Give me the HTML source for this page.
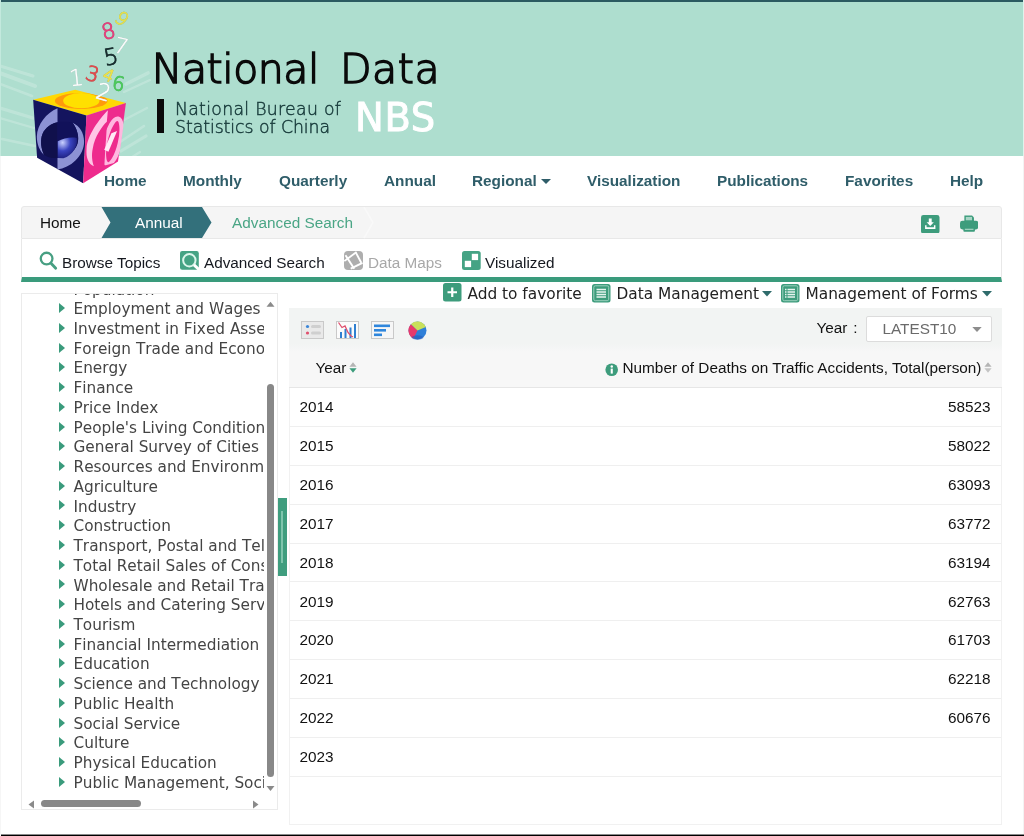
<!DOCTYPE html>
<html lang="en">
<head>
<meta charset="utf-8">
<title>National Data</title>
<style>
*{box-sizing:border-box;margin:0;padding:0}
html,body{width:1024px;height:836px;overflow:hidden;background:#fff}
body{font-family:"Liberation Sans",sans-serif;color:#222;position:relative}
#wrap{position:absolute;left:0;top:0;width:1024px;height:836px;will-change:transform}
.abs{position:absolute}
#topbar{left:0;top:0;width:1024px;height:2px;background:#2b5a61}
#hdr{left:0;top:2px;width:1024px;height:154px;background:#aedecf}
#botbar{left:1px;top:834px;width:1023px;height:2px;background:linear-gradient(#8a8a8a 50%,#000 50%)}
#title,#title2{left:151.7px;top:43.8px;font-family:"DejaVu Sans Light","DejaVu Sans",sans-serif;font-weight:200;font-size:41px;line-height:50px;color:#0a0a0a;white-space:nowrap;-webkit-text-stroke:1.5px #0a0a0a;letter-spacing:-.45px;paint-order:stroke fill}
#title2{left:340px;letter-spacing:.55px}
#bar{left:157px;top:99px;width:7px;height:34px;background:#0a0a0a}
#sub,#sub2{left:175px;top:99.5px;font-family:"DejaVu Sans Light","DejaVu Sans",sans-serif;font-weight:200;font-size:17.3px;line-height:18px;color:#173a3a;white-space:nowrap;letter-spacing:.3px;-webkit-text-stroke:.45px #173a3a}
#sub2{top:117.8px;letter-spacing:-.05px}
#nbs{left:355px;top:95px;font-family:"DejaVu Sans",sans-serif;font-size:38.5px;line-height:46px;color:#fff;white-space:nowrap;-webkit-text-stroke:.9px #fff;letter-spacing:.6px}
#nav{left:0;top:170px;height:22px;width:1024px}
#nav a{position:absolute;top:0;font-weight:bold;font-size:15.33px;line-height:22px;color:#2f5d69;text-decoration:none;white-space:nowrap}
.caret{display:inline-block;width:0;height:0;border-left:5px solid transparent;border-right:5px solid transparent;border-top:5px solid #2f5d69;vertical-align:middle;margin-left:4px}
#crumb{left:21px;top:206px;width:981px;height:32.5px;background:#f5f5f5;border:1px solid #e8e8e8;border-radius:3px 3px 0 0}
#crumb span{position:absolute;font-size:15.33px;line-height:30px;top:0.5px;white-space:nowrap}
#tools{left:21px;top:238.5px;width:981px;height:43.5px;background:#fff;border-left:1px solid #e8e8e8;border-right:1px solid #e8e8e8;border-bottom:5px solid #3a9b7c}
#tools span{position:absolute;font-size:15.3px;line-height:20px;top:14.5px;white-space:nowrap;color:#15181f}
.t2{font-family:"DejaVu Sans",sans-serif;font-size:15.35px;line-height:20px;color:#222;white-space:nowrap}
.ic{position:absolute;display:block}
#tree{left:21px;top:293px;width:257px;height:517px;border:1px solid #ebebeb;background:#fff;overflow:hidden}
#treeclip{position:absolute;left:0;top:0;width:242.3px;height:500px;overflow:hidden}
.ti{position:absolute;left:51.5px;font-family:"DejaVu Sans",sans-serif;font-kerning:none;font-size:15.3px;line-height:20px;color:#444;white-space:nowrap}
.ti i{position:absolute;left:-14.5px;top:3.9px;width:0;height:0;border-top:5.75px solid transparent;border-bottom:5.75px solid transparent;border-left:6.2px solid #3a9b7c}
#panel{left:289px;top:308px;width:713px;height:517px;background:#fff;border:1px solid #f1f1f1}
#thead{left:289px;top:308px;width:713px;height:80px;background:linear-gradient(#f2f4f3 0,#f2f4f3 36px,#f7f7f7 44px,#f7f7f7 100%);border-bottom:1px solid #e6e6e6}
.row{left:290px;width:711px;height:38.9px;border-bottom:1px solid #efefef;font-size:15.33px;line-height:20px;color:#111}
.row .y{position:absolute;left:9.5px;top:9px}
.row .v{position:absolute;right:10.5px;top:9px}

</style>
</head>
<body>
<div id="wrap">
<div id="topbar" class="abs"></div>
<div id="hdr" class="abs"></div>
<svg class="abs" style="left:0;top:0" width="160" height="200" viewBox="0 0 160 200">
<defs>
<radialGradient id="sph" cx="0.25" cy="0.25" r="0.9"><stop offset="0" stop-color="#c9d0ff"/><stop offset="0.45" stop-color="#3a44c0"/><stop offset="1" stop-color="#14146a"/></radialGradient>
<clipPath id="cr"><path d="M668,228 L810,178 L748,622 L640,652 Z"/></clipPath>
<clipPath id="ct"><path d="M100,150 L420,75 L805,175 L505,270 Z"/></clipPath>
</defs>
<g stroke="#fff" stroke-linecap="round" fill="none" opacity=".2">
<path d="M0 66 33 76" stroke-width="2.9"/><path d="M0 73 35 86" stroke-width="4.0"/><path d="M0 84 32 96" stroke-width="2.5"/><path d="M0 108 33 118" stroke-width="3.2"/><path d="M0 118 34 128" stroke-width="2.2"/><path d="M2 139 35 146" stroke-width="2.5"/>
<path d="M121 151 146 136" stroke-width="3.2"/><path d="M120 142 144 126" stroke-width="2.5"/><path d="M124 120 147 108" stroke-width="2.3"/><path d="M126 84 148 73" stroke-width="3.6"/><path d="M124 92 150 80" stroke-width="2.3"/><path d="M118 166 140 152" stroke-width="2.2"/>
</g>
<g transform="translate(20 80) scale(0.13158)">
<path d="M100,150 L420,75 L805,175 L505,270 Z" fill="#ffd803"/>
<g clip-path="url(#ct)">
<ellipse cx="465" cy="159" rx="200" ry="61" fill="#ff9a0c"/>
<ellipse cx="466" cy="157" rx="138" ry="58" fill="#ffe000"/>
<path d="M300,95 L640,95 L640,130 L300,125Z" fill="#ffd803" opacity=".0"/>
</g>
<path d="M100,150 L505,270 L480,785 L130,590 Z" fill="#14145e"/>
<path d="M285,215 C200,250 130,340 128,430 C128,490 150,540 182,568 C160,520 156,470 165,430 C178,378 222,335 285,322 Z" fill="#8d92d4"/>
<path d="M285,680 C380,670 487,580 487,470 C487,400 452,350 400,325 C432,370 447,420 441,462 C434,530 370,585 285,592 Z" fill="#8d92d4"/>
<path d="M285,322 C222,335 178,378 165,430 C156,470 160,520 182,568 C210,590 250,596 285,592 Z" fill="#10104c"/>
<path d="M285,322 C330,315 370,318 400,325 C432,370 447,420 441,462 C434,530 370,585 285,592 Z" fill="#11115a"/>
<path d="M287,466 C330,440 390,430 432,440 C442,500 400,572 330,594 L287,592 Z" fill="url(#sph)"/>
<path d="M505,270 L805,175 L745,620 L480,785 Z" fill="#ee2b8d"/>
<path d="M668,230 C600,300 512,420 506,520 C500,590 520,640 562,655 C548,620 542,570 553,520 C568,430 625,350 660,318 Z" fill="#ffc6e6"/>
<g clip-path="url(#cr)">
<ellipse cx="705" cy="468" rx="56" ry="178" transform="rotate(13 705 468)" fill="none" stroke="#ffb8df" stroke-width="34"/>
</g>
<path d="M695,405 L738,388 L672,545 L640,530 Z" fill="#ffe9f5"/>
</g>
<g font-family="'DejaVu Sans Light','DejaVu Sans',sans-serif" font-weight="200" text-anchor="middle" style="filter:drop-shadow(.8px .9px .5px rgba(70,110,100,.5))">
<text x="0" y="0" font-size="18.4" fill="#e6e04c" stroke="#e6e04c" stroke-width=".7" transform="translate(121.600 19) rotate(40) translate(0 6)">9</text>
<text x="0" y="0" font-size="21.6" fill="#e63f7b" stroke="#e63f7b" stroke-width=".8" transform="translate(108.500 31.500) rotate(-14) translate(0 7)">8</text>
<text x="0" y="0" font-size="21.6" fill="#fff" stroke="#fff" stroke-width=".5" transform="translate(121 46.500) rotate(14) translate(0 7)">7</text>
<text x="0" y="0" font-size="22.7" fill="#15292b" stroke="#15292b" stroke-width=".7" transform="translate(111 57) rotate(-10) translate(0 7.500)">5</text>
<text x="0" y="0" font-size="22.7" fill="#fff" stroke="#fff" stroke-width=".5" transform="translate(76.500 78) rotate(-6) translate(0 7.500)">1</text>
<text x="0" y="0" font-size="20.5" fill="#e2494b" stroke="#e2494b" stroke-width=".8" transform="translate(92.500 74) rotate(16) translate(0 7)">3</text>
<text x="0" y="0" font-size="16.2" fill="#ece04a" stroke="#ece04a" stroke-width=".9" transform="translate(108.500 75.500) rotate(22) translate(0 5.500)">4</text>
<text x="0" y="0" font-size="19.4" fill="#4cc95c" stroke="#4cc95c" stroke-width=".9" transform="translate(118.500 84) rotate(10) translate(0 6.500)">6</text>
<text x="0" y="0" font-size="22.7" fill="#fff" stroke="#fff" stroke-width=".6" transform="translate(103.500 92.500) rotate(16) translate(0 7.500)">2</text>
</g>
</svg>

<div id="title" class="abs">National</div><div id="title2" class="abs">Data</div>
<div id="bar" class="abs"></div>
<div id="sub" class="abs">National Bureau of</div><div id="sub2" class="abs">Statistics of China</div>
<div id="nbs" class="abs">NBS</div>
<div id="nav" class="abs">
<a style="left:104px">Home</a>
<a style="left:183px">Monthly</a>
<a style="left:279px">Quarterly</a>
<a style="left:384px">Annual</a>
<a style="left:472px">Regional<i class="caret"></i></a>
<a style="left:587px">Visualization</a>
<a style="left:717px">Publications</a>
<a style="left:845px">Favorites</a>
<a style="left:950px">Help</a>
</div>
<div id="crumb" class="abs">
<span style="left:18px;color:#111">Home</span>
<svg class="ic" style="left:79px;top:0px" width="112" height="32" viewBox="0 0 112 32"><path d="M0.5 0H101L110.5 15.5 101 31H0.5L9.500 15.5Z" fill="#33707b"/></svg>
<span style="left:113px;color:#fff">Annual</span>
<span style="left:210px;color:#4aa585">Advanced Search</span>
<svg class="ic" style="left:341px;top:0px" width="14" height="32" viewBox="0 0 14 32"><path d="M1 0 10 15.5 1 31" fill="none" stroke="#f9f9f9" stroke-width="1.5"/></svg>
<svg class="ic" style="left:899px;top:7.500px" width="18.500" height="18.500" viewBox="0 0 19 19"><rect x="0" y="0" width="19" height="19" rx="2.5" fill="#3d9c7c"/><path d="M8 3.5h3v4h2.2L9.5 11.3 5.8 7.500H8Z" fill="#fff"/><path d="M4.200 10.500v3.800h10.600v-3.800h-1.500v2H5.700v-2Z" fill="#fff"/></svg>
<svg class="ic" style="left:938px;top:7.500px" width="18.300" height="17.300" viewBox="0 0 19 18"><rect x="0" y="6" width="19" height="9" rx="2.500" fill="#3d9c7c"/><path d="M4.500 0.500H12.500L14.500 2.500V7H4.500Z" fill="#3d9c7c"/><rect x="6" y="2" width="6.500" height="3.500" fill="#a9d6c6"/><rect x="3.500" y="13" width="12" height="4.500" rx="1" fill="#3d9c7c"/><rect x="5" y="14.300" width="9" height="1.200" fill="#a9d6c6"/></svg>
</div>
<div id="tools" class="abs">
<svg class="ic" style="left:14.500px;top:12px" width="22" height="20" viewBox="0 0 22 20"><circle cx="9.600" cy="7.600" r="5.850" fill="none" stroke="#479f82" stroke-width="2.300"/><path d="M14 12.300 18.700 17.300" stroke="#479f82" stroke-width="2.800" stroke-linecap="round"/></svg>
<span style="left:40px">Browse Topics</span>
<svg class="ic" style="left:158px;top:12.500px" width="21" height="21" viewBox="0 0 21 21"><rect x="0" y="0" width="18.800" height="18.800" rx="2.200" fill="#45a384"/><circle cx="9.350" cy="9.250" r="6.200" fill="none" stroke="#dcf6ec" stroke-width="2"/><path d="M14 13.800 19.500 19" stroke="#fff" stroke-width="3"/></svg>
<span style="left:182px">Advanced Search</span>
<svg class="ic" style="left:322px;top:12.400px" width="20" height="20" viewBox="0 0 20 20"><rect x="0" y="0" width="19" height="19" rx="4" fill="#aeaeae"/><g stroke="#fff" stroke-width="1.900" fill="none"><path d="M1.500 4.200 10.250 17.700"/><path d="M12 1.900 17.300 11.800"/><path d="M12.600 1 0.300 10.100"/><path d="M18.500 11.800 6.700 17.700"/></g></svg>
<span style="left:346px;color:#a8a8a8">Data Maps</span>
<svg class="ic" style="left:439.500px;top:12px" width="20" height="20" viewBox="0 0 20 20"><rect x="0" y="0" width="18.700" height="19" rx="2.500" fill="#45a384"/><rect x="9.800" y="2.800" width="6.300" height="6.300" fill="#fff"/><rect x="2.800" y="9.800" width="6.300" height="6.300" fill="#fff"/></svg>
<span style="left:463px">Visualized</span>
</div>
<svg class="ic" style="left:443px;top:283.200px" width="19" height="19" viewBox="0 0 19 19"><rect x="0" y="0" width="18.500" height="18.500" rx="2.500" fill="#3d9c7c"/><path d="M9.250 4.500v9.500M4.500 9.250h9.500" stroke="#fff" stroke-width="2.200"/></svg>
<div class="abs t2" style="left:467.500px;top:283.500px">Add to favorite</div>
<svg class="ic" style="left:592px;top:283.500px" width="19" height="19" viewBox="0 0 19 19"><rect x="0" y="0" width="18.500" height="18.500" rx="2.500" fill="#3d9c7c"/><rect x="1.800" y="1.800" width="14.900" height="14.900" rx="1.500" fill="none" stroke="#9ad0bd" stroke-width="1"/><path d="M4.500 5.500h9.500M4.500 8h9.500M4.500 10.500h9.500M4.500 13h9.500" stroke="#e6f4ee" stroke-width="1.300"/></svg>
<div class="abs t2" style="left:616.500px;top:283.500px">Data Management</div>
<svg class="ic" style="left:761.500px;top:291px" width="10" height="6" viewBox="0 0 10 6"><path d="M0 0H10L5 5.500Z" fill="#2f6b6b"/></svg>
<svg class="ic" style="left:781px;top:283.500px" width="19" height="19" viewBox="0 0 19 19"><rect x="0" y="0" width="18.500" height="18.500" rx="2.500" fill="#3d9c7c"/><rect x="1.800" y="1.800" width="14.900" height="14.900" rx="1.500" fill="none" stroke="#9ad0bd" stroke-width="1"/><path d="M6.500 5.500h7.500M6.500 8h7.500M6.500 10.500h7.500M6.500 13h7.500" stroke="#e6f4ee" stroke-width="1.300"/><path d="M4 5.500h1.500M4 8h1.500M4 10.500h1.500M4 13h1.500" stroke="#e6f4ee" stroke-width="1.300"/></svg>
<div class="abs t2" style="left:805.500px;top:283.500px">Management of Forms</div>
<svg class="ic" style="left:981.500px;top:291px" width="10" height="6" viewBox="0 0 10 6"><path d="M0 0H10L5 5.500Z" fill="#2f6b6b"/></svg>

<div id="tree" class="abs">
<div id="treeclip">
<div class="ti" style="top:-14.43px"><i></i>Population</div>
<div class="ti" style="top:5.30px"><i></i>Employment and Wages</div>
<div class="ti" style="top:25.03px"><i></i>Investment in Fixed Assets</div>
<div class="ti" style="top:44.76px"><i></i>Foreign Trade and Economic Cooperation</div>
<div class="ti" style="top:64.49px"><i></i>Energy</div>
<div class="ti" style="top:84.22px"><i></i>Finance</div>
<div class="ti" style="top:103.95px"><i></i>Price Index</div>
<div class="ti" style="top:123.68px"><i></i>People's Living Conditions</div>
<div class="ti" style="top:143.41px"><i></i>General Survey of Cities</div>
<div class="ti" style="top:163.14px"><i></i>Resources and Environment</div>
<div class="ti" style="top:182.87px"><i></i>Agriculture</div>
<div class="ti" style="top:202.60px"><i></i>Industry</div>
<div class="ti" style="top:222.33px"><i></i>Construction</div>
<div class="ti" style="top:242.06px"><i></i>Transport, Postal and Telecommunication Services</div>
<div class="ti" style="top:261.79px"><i></i>Total Retail Sales of Consumer Goods</div>
<div class="ti" style="top:281.52px"><i></i>Wholesale and Retail Trades</div>
<div class="ti" style="top:301.25px"><i></i>Hotels and Catering Services</div>
<div class="ti" style="top:320.98px"><i></i>Tourism</div>
<div class="ti" style="top:340.71px"><i></i>Financial Intermediation</div>
<div class="ti" style="top:360.44px"><i></i>Education</div>
<div class="ti" style="top:380.17px"><i></i>Science and Technology</div>
<div class="ti" style="top:399.90px"><i></i>Public Health</div>
<div class="ti" style="top:419.63px"><i></i>Social Service</div>
<div class="ti" style="top:439.36px"><i></i>Culture</div>
<div class="ti" style="top:459.09px"><i></i>Physical Education</div>
<div class="ti" style="top:478.82px"><i></i>Public Management, Social Security and Social Organization</div>
</div>
</div>
<div id="panel" class="abs"></div>
<div id="thead" class="abs"></div>
<div class="row abs" style="top:388.0px"><span class="y">2014</span><span class="v">58523</span></div>
<div class="row abs" style="top:426.9px"><span class="y">2015</span><span class="v">58022</span></div>
<div class="row abs" style="top:465.8px"><span class="y">2016</span><span class="v">63093</span></div>
<div class="row abs" style="top:504.7px"><span class="y">2017</span><span class="v">63772</span></div>
<div class="row abs" style="top:543.6px"><span class="y">2018</span><span class="v">63194</span></div>
<div class="row abs" style="top:582.5px"><span class="y">2019</span><span class="v">62763</span></div>
<div class="row abs" style="top:621.4px"><span class="y">2020</span><span class="v">61703</span></div>
<div class="row abs" style="top:660.3px"><span class="y">2021</span><span class="v">62218</span></div>
<div class="row abs" style="top:699.2px"><span class="y">2022</span><span class="v">60676</span></div>
<div class="row abs" style="top:738.1px"><span class="y">2023</span><span class="v"></span></div>

<!-- tree scrollbars -->
<svg class="ic" style="left:266px;top:301px" width="9" height="7" viewBox="0 0 9 7"><path d="M4.500 0.800 8.500 5.800H0.500Z" fill="#8a8a8a"/></svg>
<div class="abs" style="left:267px;top:384px;width:7px;height:393px;border-radius:3.500px;background:#888"></div>
<svg class="ic" style="left:266px;top:785px" width="9" height="7" viewBox="0 0 9 7"><path d="M0.500 1H8.500L4.500 6Z" fill="#8a8a8a"/></svg>
<svg class="ic" style="left:27.500px;top:799.500px" width="7" height="9" viewBox="0 0 7 9"><path d="M0.500 4.500 6 0.500V8.500Z" fill="#8a8a8a"/></svg>
<div class="abs" style="left:40.500px;top:800px;width:100px;height:7px;border-radius:3.500px;background:#888"></div>
<svg class="ic" style="left:251.500px;top:799.500px" width="7" height="9" viewBox="0 0 7 9"><path d="M6.500 4.500 1 0.500V8.500Z" fill="#8a8a8a"/></svg>
<!-- splitter -->
<div class="abs" style="left:277.500px;top:498px;width:9px;height:78px;background:#3f9d7e"></div>
<div class="abs" style="left:281px;top:511px;width:1.500px;height:52px;background:#7fc4ac"></div>
<!-- chart icons -->
<svg class="ic" style="left:301px;top:320.600px" width="24" height="19" viewBox="0 0 24 19"><rect x="0.500" y="0.500" width="22" height="17" fill="#e9e9e9" stroke="#c9c9c9"/><circle cx="6.500" cy="5.500" r="1.600" fill="#3b86d8"/><circle cx="6.500" cy="12" r="1.600" fill="#e0506e"/><rect x="10" y="4" width="10" height="3" rx="1.500" fill="#cfcfcf"/><rect x="10" y="10.500" width="10" height="3" rx="1.500" fill="#cfcfcf"/></svg>
<svg class="ic" style="left:335.500px;top:320.600px" width="24" height="19" viewBox="0 0 24 19"><rect x="0.500" y="0.500" width="22" height="17" fill="#fbfbfb" stroke="#c9c9c9"/><rect x="4" y="11" width="2" height="6" fill="#2f7fd0"/><rect x="8.500" y="8" width="2" height="9" fill="#2f7fd0"/><rect x="13.500" y="6.500" width="2" height="10.500" fill="#2f7fd0"/><rect x="18" y="3" width="2" height="14" fill="#2f7fd0"/><path d="M2.500 1.500 6 6.500 9 5 12 11.500 15 15 17 16" fill="none" stroke="#e0506e" stroke-width="1.300"/></svg>
<svg class="ic" style="left:371px;top:320.600px" width="24" height="19" viewBox="0 0 24 19"><rect x="0.500" y="0.500" width="22" height="17" fill="#f6f6f6" stroke="#c9c9c9"/><rect x="3" y="3.500" width="16" height="2.600" fill="#2f86dc"/><rect x="3" y="8" width="12" height="2.600" fill="#2f86dc"/><rect x="3" y="12.500" width="8" height="2.600" fill="#2f86dc"/></svg>
<svg class="ic" style="left:407.500px;top:320.600px" width="20" height="20" viewBox="0 0 20 20"><circle cx="9.500" cy="9.500" r="9" fill="#2f7fd8"/><path d="M9.500 9.500 3 3.200A9 9 0 0 0 5.500 17.600Z" fill="#e8396b"/><path d="M9.500 9.500 3 3.200A9 9 0 0 1 17.800 6Z" fill="#c9e05a"/><ellipse cx="9.500" cy="16.500" rx="6" ry="2.200" fill="#2457b8" opacity=".55"/></svg>
<!-- year select -->
<div class="abs" style="left:816.500px;top:318px;font-size:15.33px;line-height:20px;color:#111;white-space:nowrap;word-spacing:1.500px">Year :</div>
<div class="abs" style="left:866px;top:316px;width:125.500px;height:26px;background:#fff;border:1px solid #dcdcdc;border-radius:2px"></div>
<div class="abs" style="left:882.500px;top:318.500px;font-size:15.33px;line-height:20px;color:#6a6a6a;white-space:nowrap">LATEST10</div>
<svg class="ic" style="left:972px;top:327px" width="10" height="6" viewBox="0 0 10 6"><path d="M0.300 0H9.700L5 5Z" fill="#8d8d8d"/></svg>
<!-- table header -->
<div class="abs" style="left:315.500px;top:358px;font-size:15.33px;line-height:20px;color:#111;white-space:nowrap">Year</div>
<svg class="ic" style="left:349px;top:362px" width="8" height="11" viewBox="0 0 8 11"><path d="M4 0.300 7.600 4.700H0.400Z" fill="#b5b5b5"/><path d="M0.400 6.300H7.600L4 10.700Z" fill="#3d9c7c"/></svg>
<svg class="ic" style="left:605px;top:362.500px" width="14" height="14" viewBox="0 0 14 14"><circle cx="6.700" cy="6.700" r="6.300" fill="#3d9c7c"/><rect x="5.700" y="5.600" width="2.100" height="5" fill="#fff"/><circle cx="6.750" cy="3.600" r="1.250" fill="#fff"/></svg>
<div class="abs" style="left:622.500px;top:358px;font-size:15.33px;line-height:20px;color:#111;white-space:nowrap">Number of Deaths on Traffic Accidents, Total(person)</div>
<svg class="ic" style="left:983.500px;top:362px" width="8" height="11" viewBox="0 0 8 11"><path d="M4 0.300 7.600 4.700H0.400Z" fill="#b5b5b5"/><path d="M0.400 6.300H7.600L4 10.700Z" fill="#c4c4c4"/></svg>

<div class="abs" style="left:1023px;top:0;width:1px;height:156px;background:#dff3ec"></div><div class="abs" style="left:1023px;top:156px;width:1px;height:678px;background:#f3f3f3"></div><div class="abs" style="left:0;top:0;width:1px;height:156px;background:#c3e9dd"></div><div class="abs" style="left:0;top:156px;width:1px;height:680px;background:#f6f6f6"></div>
<div id="botbar" class="abs"></div>
</div>
</body>
</html>
